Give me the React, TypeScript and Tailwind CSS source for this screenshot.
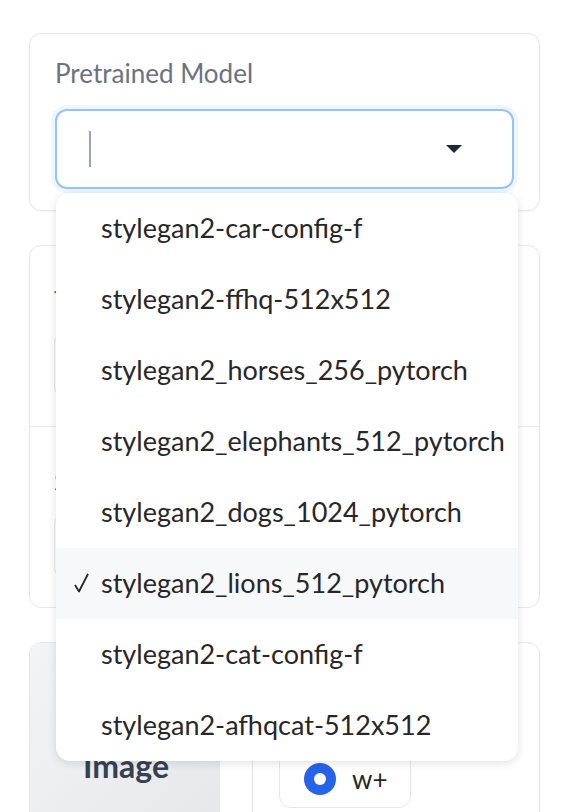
const models = [
  "stylegan2-car-config-f",
  "stylegan2-ffhq-512x512",
  "stylegan2_horses_256_pytorch",
  "stylegan2_elephants_512_pytorch",
  "stylegan2_dogs_1024_pytorch",
  "stylegan2_lions_512_pytorch",
  "stylegan2-cat-config-f",
  "stylegan2-afhqcat-512x512",
];

const selected = "stylegan2_lions_512_pytorch";

function CheckMark() {
  return (
    <svg className="absolute left-[18px] top-[25px]" width="15" height="20" viewBox="0 0 15 20">
      <path d="M1 12 L5 18.5 L14 1" fill="none" stroke="#27272a" strokeWidth="1.8" strokeLinejoin="round" />
    </svg>
  );
}

function ModelDropdown() {
  return (
    <div className="absolute left-[1px] top-full z-10 mt-[4px] w-[462px] overflow-hidden rounded-[14px] bg-white shadow-[0_2px_10px_rgba(0,0,0,0.12)]">
      {models.map((name) => {
        const isSelected = name === selected;
        return (
          <div
            key={name}
            className={
              isSelected
                ? "relative flex h-[71px] items-center bg-[#f7f8fa] pl-[45px] text-[27px] text-[#27272a]"
                : "relative flex h-[71px] items-center pl-[45px] text-[27px] text-[#27272a]"
            }
          >
            {isSelected && <CheckMark />}
            {name}
          </div>
        );
      })}
    </div>
  );
}

function FieldStub({ label }: { label: string }) {
  return (
    <div className="flex h-[180px] flex-col px-[24px] pt-[36px]">
      <p className="text-[26px] text-[#6b7280]">{label}</p>
      <div className="mt-[12px] h-[64px] rounded-[10px] border border-[#e5e7eb]" />
    </div>
  );
}

export default function App() {
  return (
    <div className="min-h-screen bg-white font-['Lato',sans-serif]">
      <div className="flex flex-col gap-[34px] pl-[29px] pr-[22px] pt-[33px]">
        <div className="rounded-[12px] border border-[#e5e7eb] px-[25px] pb-[21px] pt-[23px] shadow-[0_1px_2px_rgba(0,0,0,0.04)]">
          <p className="text-[26px] leading-[32px] text-[#6b7280]">Pretrained Model</p>
          <div className="relative mt-[20px]">
            <div className="flex h-[80px] items-center rounded-[12px] border-2 border-[#93c5fd] bg-white pl-[32px] pr-[50px] shadow-[0_0_0_4px_#eff6ff]">
              <span className="h-[36px] w-[2px] bg-[#9ca3af]" />
              <svg className="ml-auto" width="16" height="8" viewBox="0 0 16 8">
                <path d="M0 0 L16 0 L8 8 Z" fill="#1f2937" />
              </svg>
            </div>
            <ModelDropdown />
          </div>
        </div>

        <div className="rounded-[12px] border border-[#e5e7eb]">
          <FieldStub label="Truncation psi" />
          <div className="border-t border-[#e5e7eb]" />
          <FieldStub label="Seed" />
        </div>

        <div className="flex h-[200px] overflow-hidden rounded-[12px] border border-[#e5e7eb]">
          <div className="flex w-[190px] items-end bg-linear-to-br from-[#f3f4f6] to-[#e5e7eb] pb-[51px] pl-[53px]">
            <span className="text-[32px] font-bold text-[#374151]">Image</span>
          </div>
          <div className="ml-[32px] flex-1 border-l border-[#e5e7eb] pl-[26px] pt-[107px]">
            <div className="flex h-[58px] w-[132px] items-center gap-[16px] rounded-[12px] border border-[#e5e7eb] bg-white pl-[24px]">
              <span className="flex h-[32px] w-[32px] items-center justify-center rounded-full bg-[#2563eb]">
                <span className="h-[12px] w-[12px] rounded-full bg-white" />
              </span>
              <span className="text-[26px] text-[#27272a]">w+</span>
            </div>
          </div>
        </div>
      </div>
    </div>
  );
}
